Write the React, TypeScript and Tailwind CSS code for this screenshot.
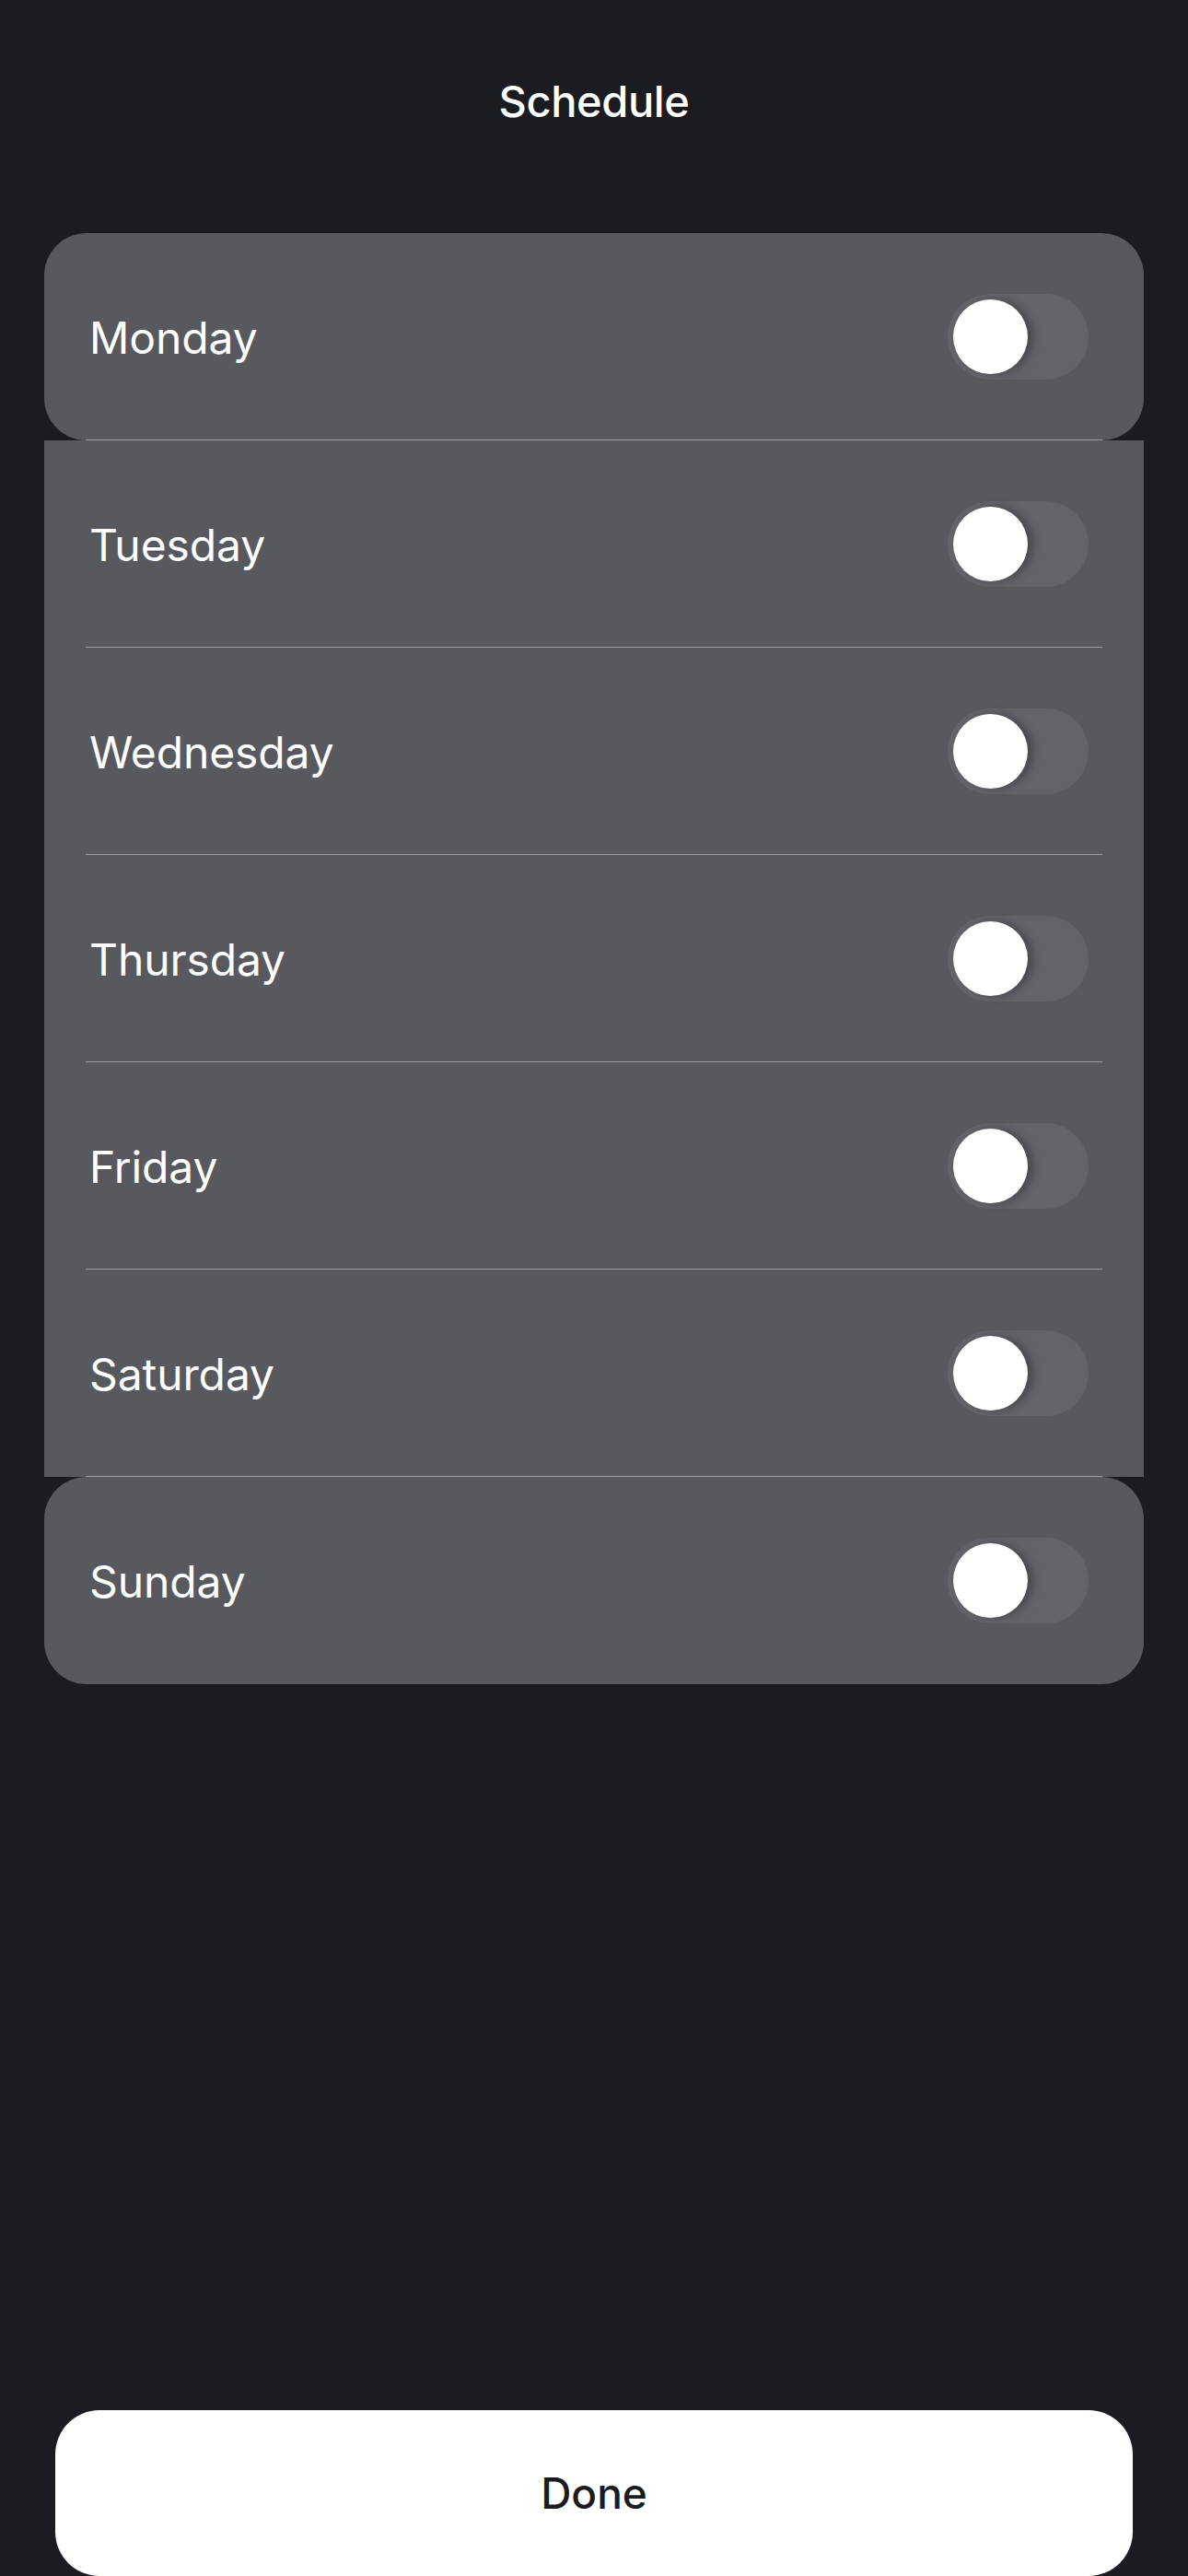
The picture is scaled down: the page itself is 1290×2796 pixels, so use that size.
import { useState } from 'react';

const DAYS = ['Monday', 'Tuesday', 'Wednesday', 'Thursday', 'Friday', 'Saturday', 'Sunday'];

function Toggle({ on, onChange }: { on: boolean; onChange: () => void }) {
  return (
    <button
      onClick={onChange}
      className={`relative w-[153px] h-[93px] rounded-full p-[6px] flex items-center ${
        on ? 'bg-[#34c759] justify-end' : 'bg-[#636369] justify-start'
      }`}
    >
      <span className="block w-[81px] h-[81px] rounded-full bg-white shadow-[6px_0_10px_rgba(0,0,0,0.28)]" />
    </button>
  );
}

export default function App() {
  const [enabled, setEnabled] = useState<Record<string, boolean>>({});

  return (
    <div
      className="min-h-[2796px] w-full bg-[#1b1b22] flex flex-col"
      style={{ fontFamily: 'Inter, "Noto Sans", sans-serif' }}
    >
      {/* Header */}
      <div className="h-[220px] flex items-start justify-center pt-[80px]">
        <h1 className="text-[47px] leading-[60px] font-medium text-white tracking-[-0.4px]">Schedule</h1>
      </div>

      {/* Day rows */}
      <div className="px-[48px] pt-[33px] flex flex-col">
        {DAYS.map((day, i) => {
          const first = i === 0;
          const last = i === DAYS.length - 1;
          const rounded = first || last ? 'rounded-[46px]' : '';
          return (
            <div key={day} className={`bg-[#58595e] h-[225px] flex flex-col ${rounded}`}>
              <div className="flex-1 flex items-center justify-between pl-[49px] pr-[60px]">
                <span className="text-[48px] text-white tracking-[-0.1px] pt-[3px]">{day}</span>
                <Toggle
                  on={!!enabled[day]}
                  onChange={() => setEnabled((s) => ({ ...s, [day]: !s[day] }))}
                />
              </div>
              {!last && <div className="h-px mx-[45px] bg-[#9c9ca1]" />}
            </div>
          );
        })}
      </div>

      <div className="flex-1" />

      {/* Done */}
      <div className="px-[60px]">
        <button className="w-full h-[180px] rounded-[48px] bg-white text-[#1b1b22] text-[46px] font-medium">
          Done
        </button>
      </div>
    </div>
  );
}
